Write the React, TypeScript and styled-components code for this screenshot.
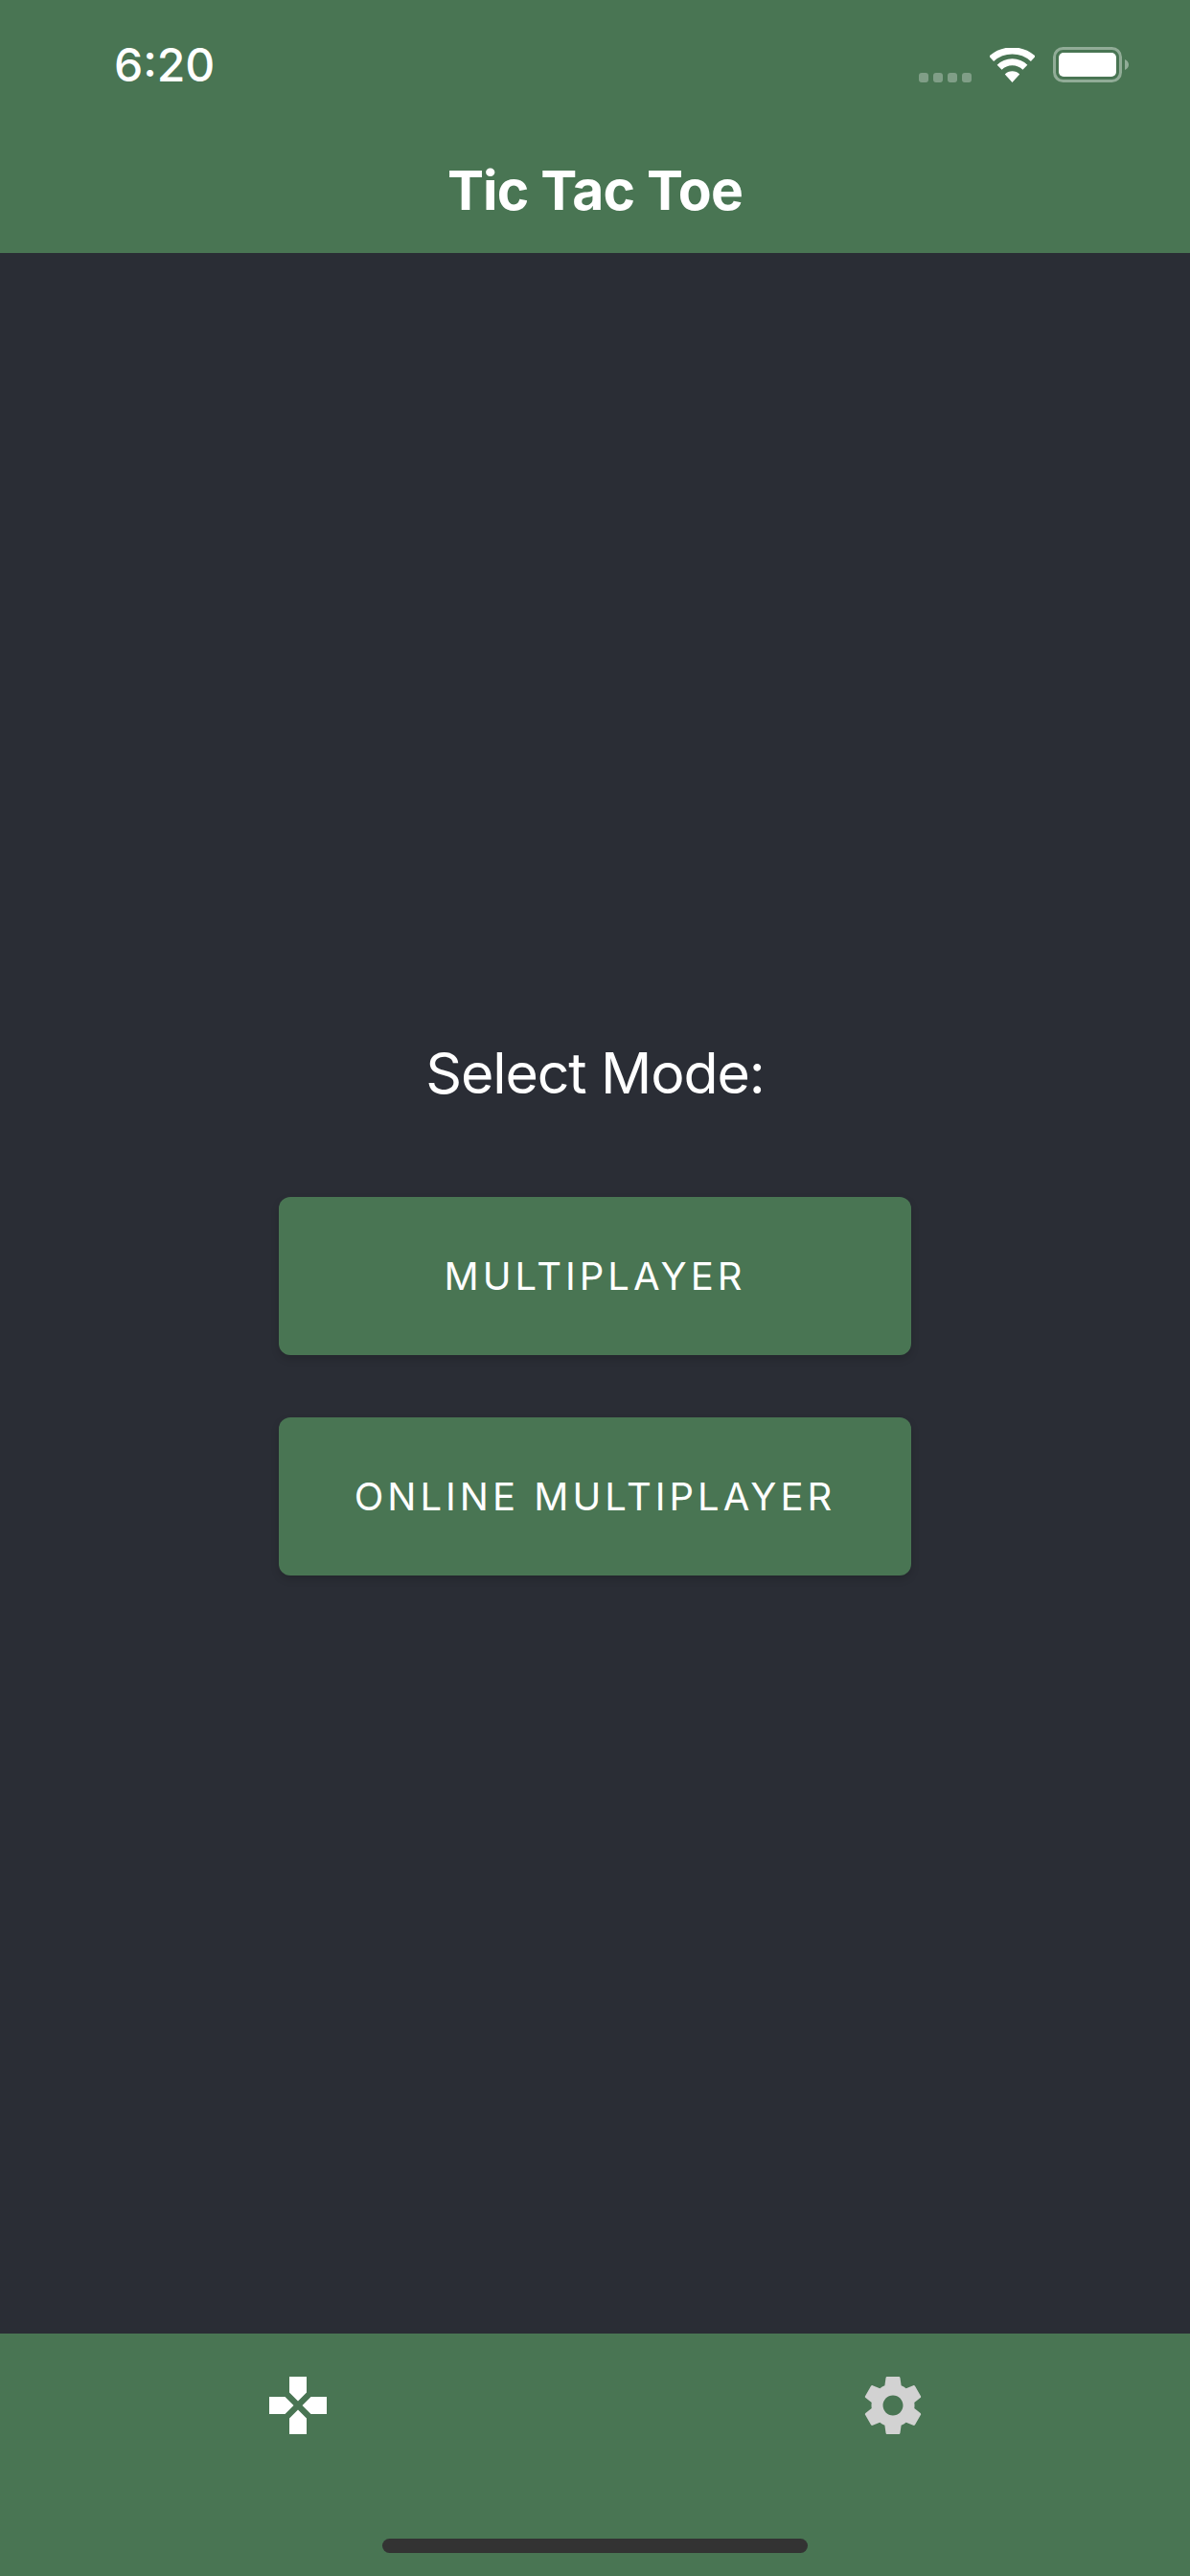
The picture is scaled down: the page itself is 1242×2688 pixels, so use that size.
import React from 'react';
import styled, { createGlobalStyle } from 'styled-components';
import { MdGames } from 'react-icons/md';

const GREEN = '#497553';
const DARK = '#2a2d35';

const GlobalStyle = createGlobalStyle`
  html, body {
    margin: 0;
    padding: 0;
    background: ${DARK};
  }
  * {
    box-sizing: border-box;
  }
`;

const Screen = styled.div`
  width: 1242px;
  height: 2688px;
  display: flex;
  flex-direction: column;
  overflow: hidden;
  background: ${DARK};
  color: #fff;
  font-family: Inter, 'Liberation Sans', sans-serif;
`;

const Header = styled.header`
  height: 264px;
  flex-shrink: 0;
  background: ${GREEN};
  display: flex;
  flex-direction: column;
`;

const StatusBar = styled.div`
  height: 165px;
  padding: 0 64px 0 119px;
  display: flex;
  align-items: flex-start;
  justify-content: space-between;
`;

const Time = styled.span`
  margin-top: 39px;
  font-size: 48px;
  line-height: 58px;
  font-weight: 500;
`;

const StatusIcons = styled.div`
  margin-top: 49px;
  display: flex;
  align-items: flex-end;
`;

const SignalDots = styled.div`
  display: flex;
  gap: 5px;
  margin-right: 19px;
`;

const SignalDot = styled.span`
  width: 10px;
  height: 10px;
  border-radius: 3px;
  background: rgba(255, 255, 255, 0.3);
`;

const Title = styled.h1`
  margin: 0;
  font-size: 57px;
  line-height: 68px;
  font-weight: 700;
  letter-spacing: -0.8px;
  text-align: center;
`;

const Main = styled.main`
  flex: 1;
  padding-top: 820px;
  display: flex;
  flex-direction: column;
  align-items: center;
`;

const ModeLabel = styled.h2`
  margin: 0 0 93px;
  font-size: 59px;
  line-height: 72px;
  font-weight: 400;
  letter-spacing: -1.1px;
  text-align: center;
`;

const ModeButton = styled.button`
  width: 660px;
  height: 165px;
  margin-bottom: 65px;
  border: none;
  border-radius: 12px;
  background: ${GREEN};
  color: #fff;
  font-family: inherit;
  font-size: 40px;
  font-weight: 400;
  letter-spacing: 4px;
  box-shadow: 0 4px 8px rgba(0, 0, 0, 0.15);
`;

const TabBar = styled.nav`
  height: 253px;
  flex-shrink: 0;
  background: ${GREEN};
  padding-top: 39px;
  display: flex;
  flex-direction: column;
`;

const Tabs = styled.div`
  display: grid;
  grid-template-columns: 1fr 1fr;
`;

const Tab = styled.div<{ $active?: boolean }>`
  display: flex;
  justify-content: center;
  color: ${props => (props.$active ? '#fff' : '#d2d2d2')};
  font-size: 72px;
  line-height: 0;
`;

const HomeIndicator = styled.div`
  width: 444px;
  height: 15px;
  margin: 103px auto 0;
  border-radius: 8px;
  background: #333;
`;

const WifiIcon = () => (
  <svg width="47" height="36" viewBox="0 0 47 36" fill="none" style={{ marginRight: 19 }}>
    <path d="M1.7 11.4A32.5 32.5 0 0 1 45.3 11.4" stroke="#fff" strokeWidth="7.2" />
    <path d="M10.1 20.2A19 19 0 0 1 36.9 20.2" stroke="#fff" strokeWidth="7" />
    <path d="M23.5 36L15.8 27.4A11 11 0 0 1 31.2 27.4Z" fill="#fff" />
  </svg>
);

const BatteryIcon = () => (
  <svg width="79" height="37" viewBox="0 0 79 37" fill="none">
    <rect x="1.5" y="1.5" width="69" height="34" rx="9" stroke="#fff" strokeOpacity="0.4" strokeWidth="3" />
    <rect x="6" y="6" width="60" height="25" rx="5" fill="#fff" />
    <path d="M75 13C77.5 14 79 16 79 18.5C79 21 77.5 23 75 24Z" fill="#fff" fillOpacity="0.4" />
  </svg>
);

const GearIcon = () => (
  <svg width="1em" height="1em" viewBox="0 0 24 24" fill="currentColor">
    <path d="M19.43 12.98c.04-.32.07-.64.07-.98s-.03-.66-.07-.98l2.11-1.65c.19-.15.24-.42.12-.64l-2-3.46c-.12-.22-.39-.3-.61-.22l-2.49 1c-.52-.4-1.08-.73-1.69-.98l-.38-2.65C14.46 2.18 14.25 2 14 2h-4c-.25 0-.46.18-.49.42l-.38 2.65c-.61.25-1.17.59-1.69.98l-2.49-1c-.23-.09-.49 0-.61.22l-2 3.46c-.13.22-.07.49.12.64l2.11 1.65c-.04.32-.07.65-.07.98s.03.66.07.98l-2.11 1.65c-.19.15-.24.42-.12.64l2 3.46c.12.22.39.3.61.22l2.49-1c.52.4 1.08.73 1.69.98l.38 2.65c.03.24.24.42.49.42h4c.25 0 .46-.18.49-.42l.38-2.65c.61-.25 1.17-.59 1.69-.98l2.49 1c.23.09.49 0 .61-.22l2-3.46c.12-.22.07-.49-.12-.64l-2.11-1.65zM12 15.5c-1.93 0-3.5-1.57-3.5-3.5s1.57-3.5 3.5-3.5 3.5 1.57 3.5 3.5-1.57 3.5-3.5 3.5z" />
  </svg>
);

const modes = ['MULTIPLAYER', 'ONLINE MULTIPLAYER'];

const App: React.FC = () => (
  <Screen>
    <GlobalStyle />
    <Header>
      <StatusBar>
        <Time>6:20</Time>
        <StatusIcons>
          <SignalDots>
            {[0, 1, 2, 3].map(i => (
              <SignalDot key={i} />
            ))}
          </SignalDots>
          <WifiIcon />
          <BatteryIcon />
        </StatusIcons>
      </StatusBar>
      <Title>Tic Tac Toe</Title>
    </Header>

    <Main>
      <ModeLabel>Select Mode:</ModeLabel>
      {modes.map(mode => (
        <ModeButton key={mode}>{mode}</ModeButton>
      ))}
    </Main>

    <TabBar>
      <Tabs>
        <Tab $active>
          <MdGames />
        </Tab>
        <Tab>
          <GearIcon />
        </Tab>
      </Tabs>
      <HomeIndicator />
    </TabBar>
  </Screen>
);

export default App;
